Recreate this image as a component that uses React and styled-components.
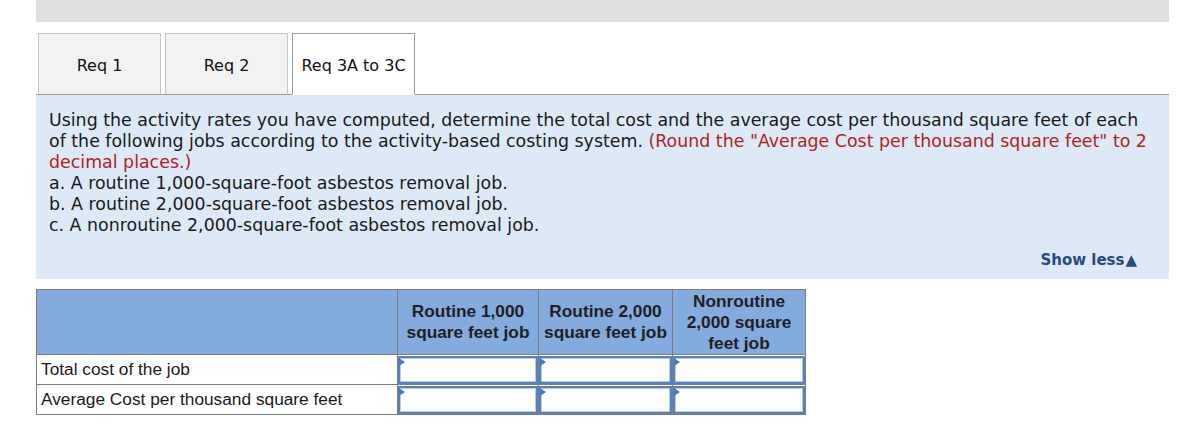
import React from "react";
import styled, { createGlobalStyle } from "styled-components";

const GlobalStyle = createGlobalStyle`
  body {
    margin: 0;
    background: #fff;
    font-family: "DejaVu Sans", Verdana, sans-serif;
  }
`;

const Page = styled.div`
  width: 1133px;
  padding-left: 36px;
`;

const TopBar = styled.div`
  height: 22px;
  background: #e0e0e0;
`;

const TabRow = styled.div`
  display: flex;
  gap: 4px;
  margin-top: 11px;
  padding-left: 2px;
  border-bottom: 1px solid #9c9c9c;
`;

const Tab = styled.div`
  width: 123px;
  height: 62px;
  box-sizing: border-box;
  display: flex;
  align-items: center;
  justify-content: center;
  padding-top: 3px;
  font-size: 16px;
  color: #111;
  margin-bottom: -1px;
  background: ${(p) => (p.active ? "#fff" : "#f2f2f2")};
  border: 1px solid ${(p) => (p.active ? "#9c9c9c" : "#c4c4c4")};
  border-bottom-color: ${(p) => (p.active ? "#fff" : "#9c9c9c")};
`;

const Panel = styled.div`
  background: #dde9f6;
  padding: 15px 15px 10px 13px;
  height: 184px;
  box-sizing: border-box;
  display: flex;
  flex-direction: column;
`;

const Prompt = styled.div`
  font-size: 17.4px;
  line-height: 21px;
  color: #1a1a1a;
`;

const Note = styled.span`
  color: #b2231d;
`;

const ShowLess = styled.div`
  margin-top: auto;
  align-self: flex-end;
  margin-right: 17px;
  margin-bottom: 0;
  font-size: 15px;
  font-weight: bold;
  color: #284a7e;
  display: flex;
  align-items: center;
  gap: 1px;
`;

const Arrow = styled.span`
  font-size: 15px;
`;

const Table = styled.table`
  margin-top: 10px;
  border-collapse: collapse;
  font-family: "Liberation Sans", Arial, sans-serif;
  table-layout: fixed;
  width: 769px;
`;

const HeadCell = styled.th`
  background: #83abde;
  border: 1px solid #7d7d7d;
  height: 65px;
  padding: 0 1px;
  font-size: 17.3px;
  line-height: 21px;
  font-weight: bold;
  color: #1f1f1f;
  text-align: center;
  box-sizing: border-box;
`;

const LabelCell = styled.td`
  border: 1px solid #7d7d7d;
  height: 30px;
  padding: 0 4px;
  font-size: 17.3px;
  color: #1a1a1a;
  box-sizing: border-box;
  white-space: nowrap;
`;

const InputCell = styled.td`
  border: 1px solid #7d7d7d;
  padding: 0;
  height: 30px;
  position: relative;
  box-sizing: border-box;
`;

const InputBox = styled.div`
  height: 28px;
  box-sizing: border-box;
  border: 2px solid #5681c1;
  background: #fff;
  box-shadow: inset 0 0 0 1px #b6cbea;
`;

const Marker = styled.span`
  position: absolute;
  left: 1px;
  top: 3px;
  width: 0;
  height: 0;
  border-top: 4px solid transparent;
  border-bottom: 4px solid transparent;
  border-left: 6px solid #4a78b8;
`;

const columns = [
  "Routine 1,000 square feet job",
  "Routine 2,000 square feet job",
  "Nonroutine 2,000 square feet job",
];

const rows = ["Total cost of the job", "Average Cost per thousand square feet"];

export default function App() {
  return (
    <Page>
      <GlobalStyle />
      <TopBar />
      <TabRow>
        <Tab>Req 1</Tab>
        <Tab>Req 2</Tab>
        <Tab active>Req 3A to 3C</Tab>
      </TabRow>
      <Panel>
        <Prompt>
          Using the activity rates you have computed, determine the total cost
          and the average cost per thousand square feet of each
          <br />
          of the following jobs according to the activity-based costing
          system.{" "}
          <Note>
            (Round the "Average Cost per thousand square feet" to 2 decimal
            places.)
          </Note>
          <br />
          a. A routine 1,000-square-foot asbestos removal job.
          <br />
          b. A routine 2,000-square-foot asbestos removal job.
          <br />
          c. A nonroutine 2,000-square-foot asbestos removal job.
        </Prompt>
        <ShowLess>
          Show less
          <Arrow>▲</Arrow>
        </ShowLess>
      </Panel>
      <Table>
        <colgroup>
          <col style={{ width: 361 }} />
          <col style={{ width: 141 }} />
          <col style={{ width: 134 }} />
          <col style={{ width: 133 }} />
        </colgroup>
        <thead>
          <tr>
            <HeadCell />
            {columns.map((c) => (
              <HeadCell key={c}>{c}</HeadCell>
            ))}
          </tr>
        </thead>
        <tbody>
          {rows.map((r) => (
            <tr key={r}>
              <LabelCell>{r}</LabelCell>
              {columns.map((c) => (
                <InputCell key={c}>
                  <InputBox />
                  <Marker />
                </InputCell>
              ))}
            </tr>
          ))}
        </tbody>
      </Table>
    </Page>
  );
}
